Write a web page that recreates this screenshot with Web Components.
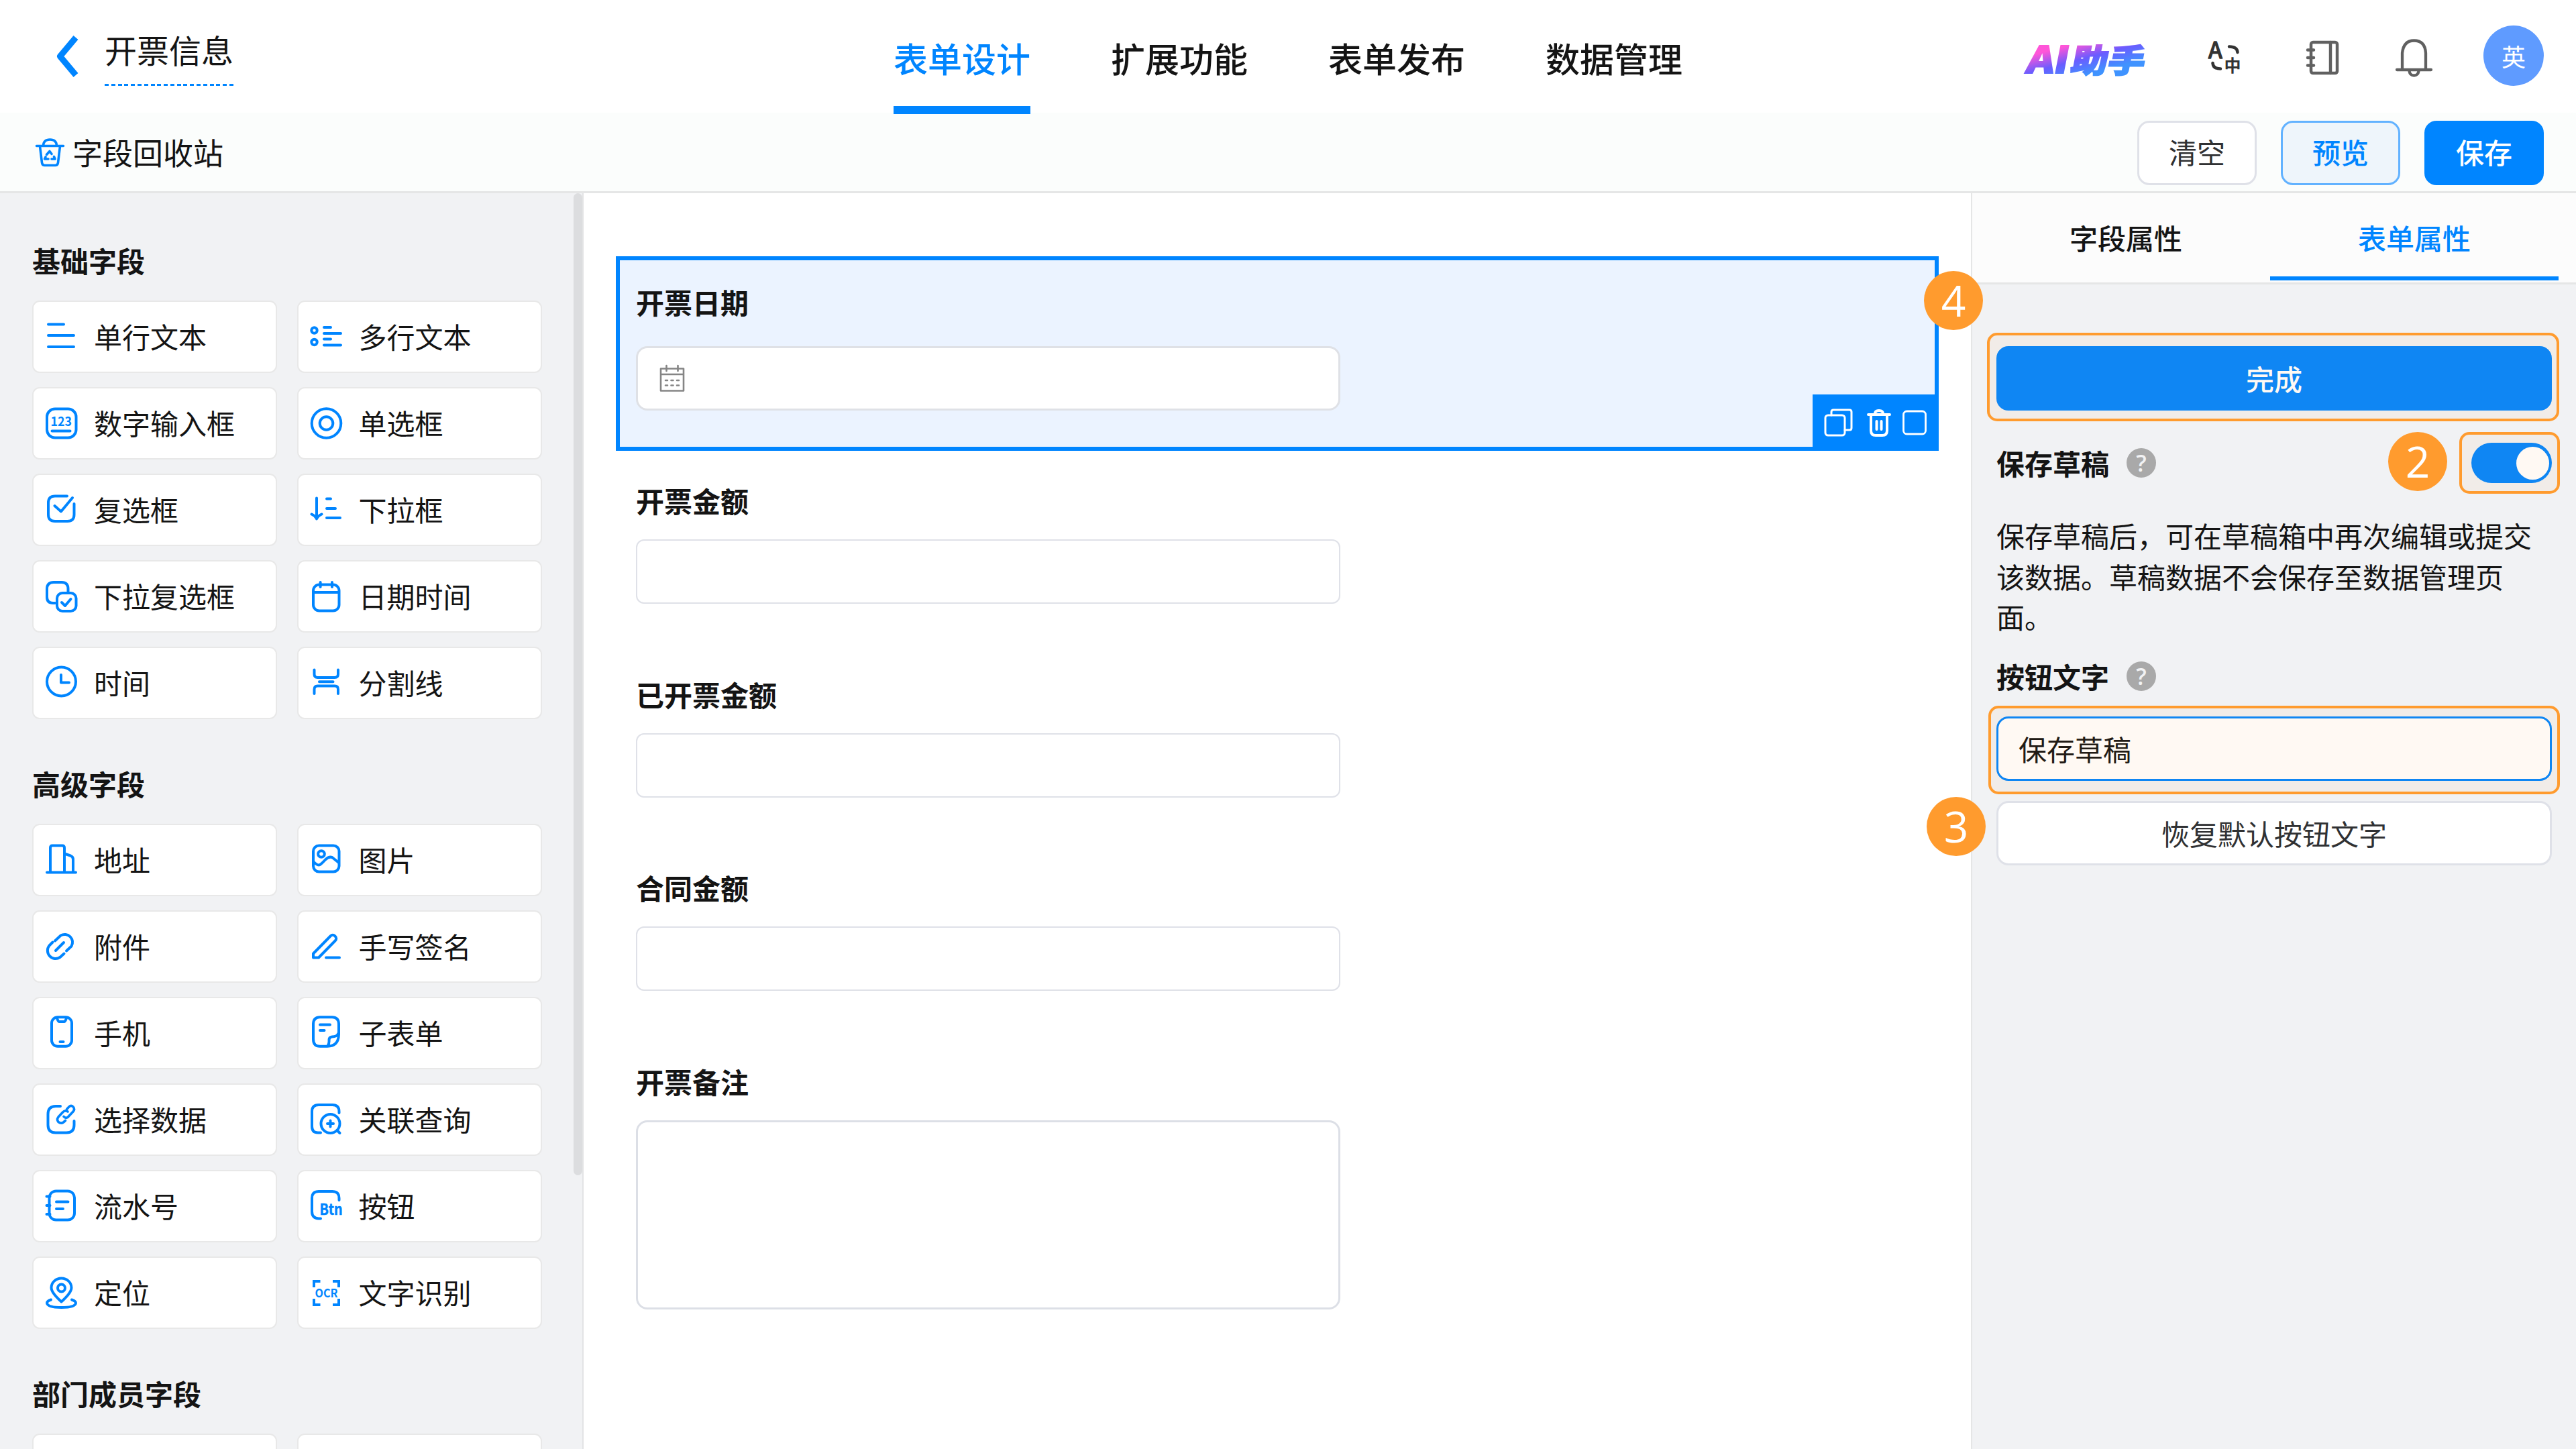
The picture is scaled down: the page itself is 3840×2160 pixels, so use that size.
<!DOCTYPE html>
<html lang="zh-CN">
<head>
<meta charset="utf-8">
<title>开票信息</title>
<style>
html, body {
  margin: 0;
  padding: 0;
}
body {
  --blue: #0085ff;
  --panel: #f1f2f4;
  --line: #e5e6e6;
  --input-line: #dfe1e8;
  width: 3840px;
  height: 2160px;
  overflow: hidden;
  background: #fff;
  color: #141414;
  font: 42px/60px "Noto Sans CJK SC", sans-serif;
}
</style>
</head>
<body>
<form-designer></form-designer>

<script>
const ICONS = {
  text: `<path d="M4 5.5h23M4 22h38M4 39h38"/>`,
  textarea: `<circle cx="5.5" cy="14.5" r="4.2"/><circle cx="5.5" cy="32" r="4.2"/><path d="M20 10h10M20 19h25M20 27.5h10M20 36.5h25"/>`,
  number: `<rect x="2" y="2.5" width="43.5" height="43" rx="12"/><path d="M9.5 35.5h27"/><text x="7.5" y="27.5" font-size="19" font-weight="700" textLength="31.5" lengthAdjust="spacingAndGlyphs">123</text>`,
  radio: `<circle cx="23.5" cy="24" r="21.8"/><circle cx="23.5" cy="24" r="9.8"/>`,
  checkbox: `<path d="M32 3.5H14Q4 3.5 4 13.5V31Q4 41 14 41H32.5Q42.5 41 42.5 31V15"/><path d="M13.5 18l9.5 8.5L40 6"/>`,
  select: `<path d="M9 6.5V37M1.5 30.5Q7 33 9 37.5Q11 33 16.5 30.5M24 7.6h6M24 22h13M24 36h20"/>`,
  multiselect: `<path d="M33.5 17V13Q33.5 3 24 3H12Q2 3 2 13V25Q2 34 11 34h3"/><rect x="17" y="19" width="28.5" height="27" rx="8"/><path d="M24 33l5 5 8.5-10"/>`,
  date: `<rect x="4" y="6.5" width="38.5" height="39" rx="9"/><path d="M4 18h38M14.6 3v7M32 3v7"/>`,
  time: `<circle cx="23.5" cy="22" r="21.5"/><path d="M23 12v11.5h12"/>`,
  divider: `<path d="M5.5 4.5V11Q5.5 16 10.5 16H36Q41 16 41 11V4.5M5.5 40V33.5Q5.5 28.5 10.5 28.5H36Q41 28.5 41 33.5V40M13 22.3h20.5"/>`,
  address: `<path d="M2 42.5h43M7 41V6Q7 2.5 10 2.5H25Q28 2.5 28 6V41M28 14.5L37 17.5Q41 19 41 23V41"/>`,
  image: `<rect x="4" y="2.5" width="38.5" height="39" rx="8.5"/><circle cx="16" cy="15" r="4.8"/><path d="M4 26Q10 33 14 31Q17 29 22 23.5Q29 17 34 21.5L42 28"/>`,
  attach: `<path d="M14 15.5L22.5 7.5A11.7 11.7 0 0 1 38.5 23.5L31 30.5M10.5 17.5L5.5 22.5A12 12 0 0 0 21.5 40L27.5 34.5M15 30L27 18"/>`,
  sign: `<path d="M4 40.5V34.5L29.5 8.5Q33 5 36.5 8.5Q40 12 36.5 15.5L12 40.5ZM23 40.5h20"/>`,
  phone: `<rect x="9" y="0.3" width="30" height="43.4" rx="9"/><path d="M17 1.5Q18.5 7 20 7H28Q29.5 7 31 1.5M21.5 37h5"/>`,
  subform: `<path d="M42 26V11Q42 0.3 32 0.3H14Q4 0.3 4 11V33Q4 43.7 14 43.7H25Q41.5 43.7 42 26ZM25.5 43Q28 40 27.5 34Q27.5 30 32 29.5Q39 29.5 41 25M14 11.5h15M14 20h6.5"/>`,
  pick: `<path d="M22 4H15Q3.5 4 3.5 16V32Q3.5 43.5 15 43.5H31Q42.5 43.5 42.5 32V26"/><path d="M31.5 8.5L35 4.8Q38 2 41.2 5Q44 8.500 41 12L33 20.5Q30 22.5 27 19.5M33 12Q29 9.5 25.500 13L19 20Q16 24 19 27.500Q23 30.500 26.5 28L29.5 25.500" stroke-width="3.6"/>`,
  query: `<path d="M42.5 14V12Q42.5 2 32.5 2H12Q2 2 2 12V34Q2 43.5 11 43.5H15"/><circle cx="29.5" cy="30" r="14"/><path d="M39.5 40L43.5 44M25 30h9M29.5 25.5v9"/>`,
  serial: `<rect x="5.5" y="1.5" width="37.5" height="43" rx="10"/><path d="M1.5 9.6h5M1.5 23h5M1.5 36h5M16 17.5h17.5M16 28h10"/>`,
  button: `<path d="M42.5 15V12Q42.5 2 32.5 2H12Q2 2 2 12V32Q2 42 12 42.5H15"/><text x="13.5" y="36.5" font-size="22" font-weight="700" stroke="currentColor" stroke-width=".5" textLength="34" lengthAdjust="spacingAndGlyphs">Btn</text>`,
  location: `<path d="M23.5 37.5Q8.5 24 8.5 16.5A15 14 0 0 1 38.5 16.5Q38.5 24 23.5 37.5Z"/><circle cx="23.5" cy="17" r="5.5"/><path d="M8 34.5Q2 36.5 2 39.5Q3 46 23.5 46Q44 46 45 39.5Q45 36.5 39 34.5"/>`,
  ocr: `<g stroke-linecap="butt" stroke-linejoin="miter"><path d="M5 16V7H14.5M33 7H42V16M5 33V42H14.5M33 42H42V33"/></g><text x="6.5" y="30.5" font-size="17" font-weight="700" textLength="34" lengthAdjust="spacingAndGlyphs">OCR</text>`,
  recycle: `<g stroke-width="3.600"><path d="M4.500 14.500H44.500M14.500 14Q15 5 24.500 5Q34 5 34.500 14M9.500 15L12.500 39.500Q13 43.500 16.500 43.500H32.500Q36 43.500 36.500 39.500L39.500 15"/></g><path d="M19.500 27.500L24 22.500L27 26.500M30.500 30.500L32 34H27M22 34H16.500L18 31" stroke-width="3.600"/>`,
  back: `<path d="M37 -4L13.5 24L37 52" stroke-width="9" stroke-linecap="butt"/>`,
  notebook: `<g stroke-width="4.5"><rect x="7" y="1" width="39" height="46" rx="3"/><path d="M36 1V47M2 12.5H11M2 24H11M2 35.5H11"/></g>`,
  bell: `<g stroke-width="4.3"><path d="M7 42V17Q9 -1.5 24.5 -1.5Q41 -1.5 42 17V42M-1 42H50M17.5 44Q18.5 50.5 24.5 50.5Q30.5 50.5 31.5 44"/></g>`,
  translate: `<g stroke-width="4.5"><path d="M31 7.5Q43 7.5 43.5 16M6.5 32Q7 40.5 18 40.5"/></g><text x="0" y="25" font-size="34" font-family="Liberation Sans" stroke="currentColor" stroke-width="1.6">A</text><text x="23.5" y="44.5" font-size="25" font-weight="700">中</text>`,
  calendar: `<g stroke-width="2.6"><path d="M7 9.5H41V42.5H7ZM7 18H41M15.5 5V13M32.5 5V13"/><path d="M14 27h3M22.5 27h3M31 27h3M14 34.5h3M22.5 34.5h3M31 34.5h3"/></g>`,
  copy: `<g stroke-width="3"><rect x="5" y="13" width="29" height="30" rx="4"/><path d="M14 13V8Q14 5 17 5H41Q44 5 44 8V32Q44 35 41 35H34"/></g>`,
  trash: `<path d="M8 12H40M18 11Q18 6 24 6Q30 6 30 11M12 13V36Q12 43 19 43H29Q36 43 36 36V13M20.500 22V34M27.500 22V34"/>`,
  square: `<rect x="7.5" y="7" width="33" height="34" rx="5" stroke-width="2.8"/>`
};

class AppIcon extends HTMLElement {
  constructor() {
    super();
    this.attachShadow({ mode: "open" });
  }

  connectedCallback() {
    this.shadowRoot.innerHTML = `
<style>
:host {
  display: block;
  flex: none;
  width: 48px;
  height: 48px;
}
svg {
  display: block;
  width: 100%;
  height: 100%;
  overflow: visible;
}
text {
  fill: currentColor;
  font-family: "Noto Sans CJK SC", sans-serif;
}
text:not([stroke]) {
  stroke: none;
}
</style>
<svg viewBox="0 0 48 48" fill="none" stroke="currentColor" stroke-width="4"
  stroke-linecap="round" stroke-linejoin="round">${ICONS[this.getAttribute("name")] || ""}</svg>`;
  }
}

class FieldCard extends HTMLElement {
  constructor() {
    super();
    this.attachShadow({ mode: "open" });
  }

  connectedCallback() {
    this.shadowRoot.innerHTML = `
<style>
:host {
  display: flex;
  align-items: center;
  box-sizing: border-box;
  padding-left: 18px;
  border: 2px solid #e8e8e8;
  border-radius: 11px;
  background: #fff;
}
app-icon {
  color: var(--blue);
}
span {
  margin-left: 24px;
  padding-bottom: 3px;
}
</style>
<app-icon name="${this.getAttribute("icon")}"></app-icon>
<span><slot></slot></span>`;
  }
}

class FieldGroup extends HTMLElement {
  constructor() {
    super();
    this.attachShadow({ mode: "open" }).innerHTML = `
<style>
:host {
  display: block;
  margin-bottom: 66px;
}
h2 {
  margin: 0 0 30px;
  font-size: 42px;
  font-weight: 700;
  line-height: 60px;
}
.cards {
  display: grid;
  grid-template-columns: 365px 365px;
  grid-auto-rows: 108px;
  gap: 21px 29.5px;
}
</style>
<h2></h2>
<div class="cards"><slot></slot></div>`;
  }

  connectedCallback() {
    this.shadowRoot.querySelector("h2").textContent = this.getAttribute("label");
  }
}

class AppButton extends HTMLElement {
  constructor() {
    super();
    this.attachShadow({ mode: "open" }).innerHTML = `
<style>
:host {
  display: flex;
  align-items: center;
  justify-content: center;
  box-sizing: border-box;
  height: 96px;
  border: 3px solid var(--input-line);
  border-radius: 18px;
  background: #fff;
  color: #303133;
}
:host([kind="plain"]) {
  border-color: #62b2ff;
  background: #eef5fb;
  color: var(--blue);
  font-weight: 500;
}
:host([kind="primary"]) {
  border-color: var(--blue);
  background: var(--blue);
  color: #fff;
  font-weight: 500;
}
</style>
<slot></slot>`;
  }
}

class AppHeader extends HTMLElement {
  constructor() {
    super();
    this.attachShadow({ mode: "open" }).innerHTML = `
<style>
:host {
  display: grid;
  grid-template-columns: 1fr auto 1fr;
  height: 168px;
  position: relative;
  z-index: 1;
}
.left {
  display: flex;
  align-items: flex-start;
  padding-left: 76px;
}
.left app-icon {
  margin-top: 60px;
  color: var(--blue);
}
h1 {
  margin: 42px 0 0 32px;
  padding-bottom: 24px;
  font-size: 48px;
  font-weight: 400;
  line-height: 62px;
  background: repeating-linear-gradient(90deg, var(--blue) 0 6px, transparent 6px 9.79px) bottom / 100% 3px no-repeat;
}
nav {
  display: flex;
  gap: 120px;
}
nav span {
  box-sizing: border-box;
  height: 170px;
  padding-top: 49px;
  font-size: 51px;
  font-weight: 500;
  line-height: 74px;
}
nav .on {
  color: var(--blue);
  border-bottom: 12px solid var(--blue);
}
.right {
  display: flex;
  align-items: center;
  justify-content: flex-end;
  height: 171px;
  padding-right: 48px;
  color: #606060;
}
.logo {
  width: 180px;
  height: 60px;
  overflow: visible;
}
.translate {
  margin-left: 94px;
  color: #333;
}
.notebook {
  margin-left: 98px;
}
.bell {
  margin-left: 88px;
}
.avatar {
  width: 90px;
  height: 90px;
  margin: 0 0 6px 80px;
  border-radius: 50%;
  background: #5f9bff;
  color: #fff;
  font-size: 36px;
  line-height: 90px;
  text-align: center;
}
</style>
<div class="left">
  <app-icon name="back"></app-icon>
  <h1>开票信息</h1>
</div>
<nav>
  <span class="on">表单设计</span>
  <span>扩展功能</span>
  <span>表单发布</span>
  <span>数据管理</span>
</nav>
<div class="right">
  <svg class="logo" viewBox="0 0 180 60">
    <defs>
      <linearGradient id="ai" gradientUnits="userSpaceOnUse" x1="70" y1="8" x2="84" y2="58">
        <stop offset="0" stop-color="#ff55d8"/>
        <stop offset=".5" stop-color="#6a5cff"/>
        <stop offset="1" stop-color="#3f93ff"/>
      </linearGradient>
    </defs>
    <g fill="url(#ai)" stroke="url(#ai)" stroke-width="2" font-family="'Noto Sans CJK SC', sans-serif" font-weight="900" transform="translate(11 0) skewX(-11)">
      <text x="0" y="53" font-size="55" textLength="62" lengthAdjust="spacingAndGlyphs">AI</text>
      <text x="66" y="51.5" font-size="48" textLength="110" lengthAdjust="spacingAndGlyphs">助手</text>
    </g>
  </svg>
  <app-icon class="translate" name="translate"></app-icon>
  <app-icon class="notebook" name="notebook"></app-icon>
  <app-icon class="bell" name="bell"></app-icon>
  <div class="avatar">英</div>
</div>`;
  }
}

class AppToolbar extends HTMLElement {
  constructor() {
    super();
    this.attachShadow({ mode: "open" }).innerHTML = `
<style>
:host {
  display: flex;
  align-items: center;
  justify-content: space-between;
  box-sizing: border-box;
  height: 120px;
  padding: 0 48px 0 50px;
  border-bottom: 3px solid var(--line);
  background: #fbfdfc;
}
.bin, .actions {
  display: flex;
  align-items: center;
}
.bin {
  gap: 10px;
  font-size: 45px;
}
.bin app-icon {
  color: var(--blue);
}
.actions {
  gap: 36px;
  padding-top: 3px;
}
app-button {
  width: 178px;
  padding-bottom: 4px;
}
</style>
<div class="bin"><app-icon name="recycle"></app-icon><span>字段回收站</span></div>
<div class="actions">
  <app-button>清空</app-button>
  <app-button kind="plain">预览</app-button>
  <app-button kind="primary">保存</app-button>
</div>`;
  }
}

class FieldSidebar extends HTMLElement {
  constructor() {
    super();
    this.attachShadow({ mode: "open" }).innerHTML = `
<style>
:host {
  display: flex;
  justify-content: space-between;
  box-sizing: border-box;
  flex: none;
  width: 870px;
  padding-left: 48px;
  border-right: 2px solid #e3e4e5;
  background: var(--panel);
  overflow: hidden;
}
.groups {
  padding-top: 70px;
}
.thumb {
  width: 13px;
  height: 1464px;
  border-radius: 7px;
  background: #dcdddf;
}
</style>
<div class="groups">
  <field-group label="基础字段">
    <field-card icon="text">单行文本</field-card>
    <field-card icon="textarea">多行文本</field-card>
    <field-card icon="number">数字输入框</field-card>
    <field-card icon="radio">单选框</field-card>
    <field-card icon="checkbox">复选框</field-card>
    <field-card icon="select">下拉框</field-card>
    <field-card icon="multiselect">下拉复选框</field-card>
    <field-card icon="date">日期时间</field-card>
    <field-card icon="time">时间</field-card>
    <field-card icon="divider">分割线</field-card>
  </field-group>
  <field-group label="高级字段">
    <field-card icon="address">地址</field-card>
    <field-card icon="image">图片</field-card>
    <field-card icon="attach">附件</field-card>
    <field-card icon="sign">手写签名</field-card>
    <field-card icon="phone">手机</field-card>
    <field-card icon="subform">子表单</field-card>
    <field-card icon="pick">选择数据</field-card>
    <field-card icon="query">关联查询</field-card>
    <field-card icon="serial">流水号</field-card>
    <field-card icon="button">按钮</field-card>
    <field-card icon="location">定位</field-card>
    <field-card icon="ocr">文字识别</field-card>
  </field-group>
  <field-group label="部门成员字段">
    <field-card></field-card>
    <field-card></field-card>
  </field-group>
</div>
<div class="thumb"></div>`;
  }
}

class FormField extends HTMLElement {
  constructor() {
    super();
    this.attachShadow({ mode: "open" }).innerHTML = `
<style>
:host {
  display: block;
  box-sizing: border-box;
  height: 288.5px;
  padding: 44px 30px 0;
}
label {
  display: block;
  font-weight: 700;
}
.box {
  display: flex;
  align-items: center;
  box-sizing: border-box;
  width: 1050px;
  height: 96px;
  margin-top: 28px;
  padding-left: 27px;
  border: 2px solid var(--input-line);
  border-radius: 12px;
  background: #fff;
  color: #858585;
}
.tools {
  display: none;
}
:host([multiline]) .box {
  height: 282px;
  border: 3px solid #dcdfe6;
  border-radius: 17px;
}
:host([selected]) {
  position: relative;
  height: 290px;
  padding: 32px 24px 0;
  border: 6px solid var(--blue);
  background: #ebf3ff;
}
:host([selected]) .box {
  margin-top: 36px;
  border: 3px solid #dfe1e6;
  border-radius: 17px;
}
:host([selected]) .tools {
  display: flex;
  align-items: center;
  box-sizing: border-box;
  position: absolute;
  right: -6px;
  bottom: -6px;
  width: 188px;
  height: 84px;
  padding-left: 14px;
  background: var(--blue);
  color: #fff;
}
.tools app-icon:nth-child(2) {
  margin-left: 13px;
}
.tools app-icon:nth-child(3) {
  margin-left: 5px;
}
</style>
<label></label>
<div class="box"><slot></slot></div>
<div class="tools">
  <app-icon name="copy"></app-icon>
  <app-icon name="trash"></app-icon>
  <app-icon name="square"></app-icon>
</div>`;
  }

  connectedCallback() {
    this.shadowRoot.querySelector("label").textContent = this.getAttribute("label");
  }
}

class FormCanvas extends HTMLElement {
  constructor() {
    super();
    this.attachShadow({ mode: "open" }).innerHTML = `
<style>
:host {
  display: block;
  flex: 1;
  padding: 94px 48px 0;
}
</style>
<form-field label="开票日期" selected><app-icon name="calendar"></app-icon></form-field>
<form-field label="开票金额"></form-field>
<form-field label="已开票金额"></form-field>
<form-field label="合同金额"></form-field>
<form-field label="开票备注" multiline></form-field>`;
  }
}

// Wraps a control with an orange outline and a numbered badge.
class StepMark extends HTMLElement {
  constructor() {
    super();
    this.attachShadow({ mode: "open" }).innerHTML = `
<style>
:host {
  display: block;
  position: relative;
}
.outline {
  position: absolute;
  inset: var(--outline);
  border: 4px solid #ff9b2e;
  border-radius: 15px;
  background: rgba(255, 155, 46, .06);
}
.badge {
  position: absolute;
  left: var(--badge-x);
  top: var(--badge-y);
  width: 88px;
  height: 88px;
  border-radius: 50%;
  background: #ff9b2e;
  color: #fff;
  font: 64px/88px "Open Sans", "Noto Sans", sans-serif;
  text-align: center;
}
</style>
<slot></slot>
<div class="outline"></div>
<div class="badge"></div>`;
  }

  connectedCallback() {
    this.shadowRoot.querySelector(".badge").textContent = this.getAttribute("step");
  }
}

class ToggleSwitch extends HTMLElement {
  constructor() {
    super();
    this.attachShadow({ mode: "open" }).innerHTML = `
<style>
:host {
  display: flex;
  align-items: center;
  justify-content: flex-end;
  box-sizing: border-box;
  width: 120px;
  height: 60px;
  padding-right: 4px;
  border-radius: 30px;
  background: var(--blue);
}
i {
  width: 49px;
  height: 49px;
  border-radius: 50%;
  background: #fff;
}
</style>
<i></i>`;
  }
}

class PropPanel extends HTMLElement {
  constructor() {
    super();
    this.attachShadow({ mode: "open" }).innerHTML = `
<style>
:host {
  display: block;
  box-sizing: border-box;
  flex: none;
  width: 902px;
  border-left: 2px solid var(--line);
  background: var(--panel);
}
.tabs {
  display: flex;
  height: 133px;
  padding-left: 14px;
  border-bottom: 3px solid var(--line);
  background: #fcfcfc;
}
.tabs span {
  box-sizing: border-box;
  width: 430px;
  height: 130px;
  padding-top: 8px;
  font-weight: 500;
  line-height: 116px;
  text-align: center;
}
.tabs .on {
  color: var(--blue);
  border-bottom: 6px solid var(--blue);
}
.body {
  padding: 92px 36px 0;
}
.done {
  --outline: -20px -11px -16px -14px;
  --badge-x: -108px;
  --badge-y: -112px;
}
.row {
  display: flex;
  align-items: center;
  height: 60px;
}
.row.first {
  margin-top: 48px;
}
.row b {
  font-weight: 700;
}
.help {
  width: 44px;
  height: 44px;
  margin-left: 26px;
  border-radius: 50%;
  background: #a9a9a9;
  color: #f1f2f4;
  font: 600 34px/44px "Open Sans", "Noto Sans", sans-serif;
  text-align: center;
}
.switch {
  --outline: -16px -12px -16px -18px;
  --badge-x: -124px;
  --badge-y: -16px;
  margin-left: auto;
}
p {
  margin: 48px 0 27.5px;
  line-height: 60.7px;
}
.name {
  --outline: -16px -12px -20px -12px;
  --badge-x: -104px;
  --badge-y: 120px;
  margin: 30px 0;
}
.input {
  box-sizing: border-box;
  height: 96px;
  padding-left: 30px;
  border: 3px solid var(--blue);
  border-radius: 18px;
  background: #fff;
  line-height: 90px;
}
</style>
<div class="tabs">
  <span>字段属性</span>
  <span class="on">表单属性</span>
</div>
<div class="body">
  <step-mark class="done" step="4"><app-button kind="primary">完成</app-button></step-mark>
  <div class="row first">
    <b>保存草稿</b>
    <span class="help">?</span>
    <step-mark class="switch" step="2"><toggle-switch></toggle-switch></step-mark>
  </div>
  <p>保存草稿后，可在草稿箱中再次编辑或提交该数据。草稿数据不会保存至数据管理页面。</p>
  <div class="row">
    <b>按钮文字</b>
    <span class="help">?</span>
  </div>
  <step-mark class="name" step="3"><div class="input">保存草稿</div></step-mark>
  <app-button>恢复默认按钮文字</app-button>
</div>`;
  }
}

class FormDesigner extends HTMLElement {
  constructor() {
    super();
    this.attachShadow({ mode: "open" }).innerHTML = `
<style>
:host {
  display: flex;
  flex-direction: column;
  height: 2160px;
}
main {
  display: flex;
  flex: 1;
  min-height: 0;
}
</style>
<app-header></app-header>
<app-toolbar></app-toolbar>
<main>
  <field-sidebar></field-sidebar>
  <form-canvas></form-canvas>
  <prop-panel></prop-panel>
</main>`;
  }
}

customElements.define("app-icon", AppIcon);
customElements.define("field-card", FieldCard);
customElements.define("field-group", FieldGroup);
customElements.define("app-button", AppButton);
customElements.define("app-header", AppHeader);
customElements.define("app-toolbar", AppToolbar);
customElements.define("field-sidebar", FieldSidebar);
customElements.define("form-field", FormField);
customElements.define("form-canvas", FormCanvas);
customElements.define("step-mark", StepMark);
customElements.define("toggle-switch", ToggleSwitch);
customElements.define("prop-panel", PropPanel);
customElements.define("form-designer", FormDesigner);
</script>
</body>
</html>
